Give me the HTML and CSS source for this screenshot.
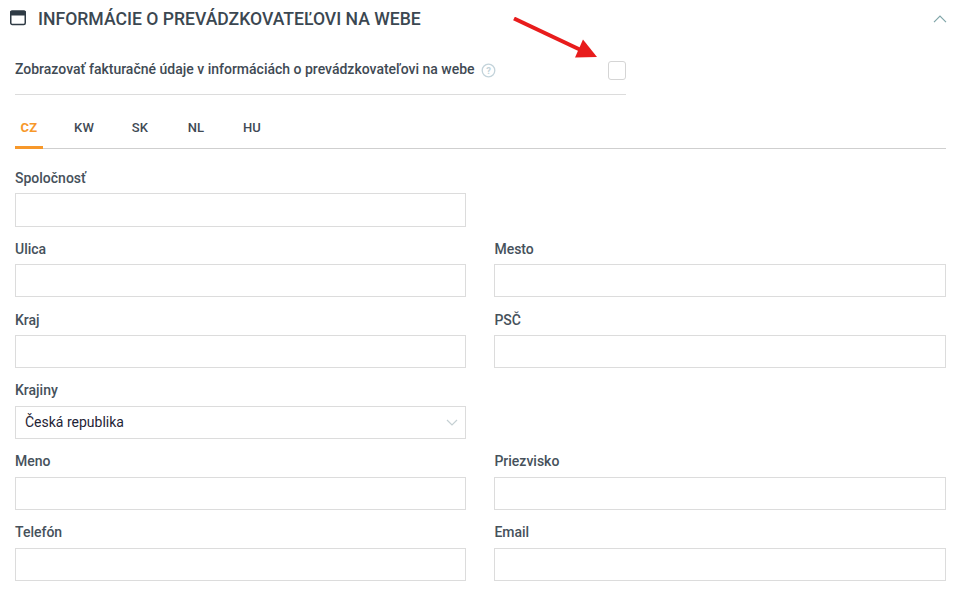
FILE: index.html
```html
<!DOCTYPE html>
<html lang="sk">
<head>
<meta charset="utf-8">
<title>Informácie o prevádzkovateľovi na webe</title>
<link rel="stylesheet" href="styles.css">
</head>
<body>
<section class="panel">
  <header class="head">
    <svg class="win-icon" width="18" height="16" viewBox="0 0 18 16"><rect x="1.750" y="1.250" width="14.500" height="13.200" rx="1.500" fill="none" stroke="#2f3b45" stroke-width="1.500"/><rect x="1" y="0.500" width="16" height="5" rx="1.500" fill="#2f3b45"/></svg>
    <h2 class="title">INFORMÁCIE O PREVÁDZKOVATEĽOVI NA WEBE</h2>
    <svg class="chev-up" width="14" height="8" viewBox="0 0 14 8"><path d="M1 7.2L7 1.2l6 6" fill="none" stroke="#7fa5a8" stroke-width="1.2"/></svg>
  </header>
  <div class="toggle-row">
    <span class="toggle-text">Zobrazovať fakturačné údaje v informáciách o prevádzkovateľovi na webe</span>
    <svg class="help" width="15" height="15" viewBox="0 0 15 15"><circle cx="7.5" cy="7.5" r="6.3" fill="none" stroke="#c3d3da" stroke-width="1.3"/><text x="7.5" y="11" text-anchor="middle" class="help-q">?</text></svg>
    <span class="check"></span>
  </div>
  <nav class="tabs">
    <a class="tab active">CZ</a><a class="tab">KW</a><a class="tab">SK</a><a class="tab">NL</a><a class="tab">HU</a>
  </nav>
  <form class="grid">
    <div class="field"><label>Spoločnosť</label><div class="input"></div></div><div class="field"></div>
    <div class="field"><label>Ulica</label><div class="input"></div></div>
    <div class="field"><label>Mesto</label><div class="input"></div></div>
    <div class="field"><label>Kraj</label><div class="input"></div></div>
    <div class="field"><label>PSČ</label><div class="input"></div></div>
    <div class="field"><label>Krajiny</label><div class="input select"><span class="select-value">Česká republika</span><svg width="12" height="7" viewBox="0 0 12 7"><path d="M1 1l5 5 5-5" fill="none" stroke="#c5d0d3" stroke-width="1.2"/></svg></div></div><div class="field"></div>
    <div class="field"><label>Meno</label><div class="input"></div></div>
    <div class="field"><label>Priezvisko</label><div class="input"></div></div>
    <div class="field"><label>Telefón</label><div class="input"></div></div>
    <div class="field"><label>Email</label><div class="input"></div></div>
  </form>
</section>
<svg class="arrow" width="90" height="45" viewBox="0 0 90 45"><line x1="1" y1="1.500" x2="72" y2="35" stroke="#e81c1c" stroke-width="4"/><polygon points="62,40.500 70,22.500 84,40" fill="#e81c1c"/></svg>
</body>
</html>
```
FILE: styles.css
```css
* { box-sizing: border-box; }
html, body { margin: 0; padding: 0; background: #fff; }
body { font-family: Roboto, "Liberation Sans", sans-serif; color: #2f3b45; width: 956px; height: 597px; overflow: hidden; position: relative; }
.panel { padding: 0 10px 0 15px; }
.head { display: flex; align-items: center; height: 38px; margin-left: -6px; }
.win-icon { margin: 0 11px 3px 0; flex: none; }
.title { margin: 0; font-size: 17.6px; font-weight: 500; color: #3b4751; line-height: 40px; flex: 1; }
.chev-up { margin-right: -1px; }
.toggle-row { display: flex; align-items: center; width: 611px; height: 57px; border-bottom: 1px solid #dcdcdc; padding-top: 8px; }
.toggle-text { font-size: 14px; font-weight: 500; color: #3f4a54; margin-bottom: 2px; }
.help { margin-left: 6px; flex: none; }
.help-q { font: 700 9.5px Roboto, sans-serif; fill: #c3d3da; }
.check { margin-left: auto; width: 18px; height: 19px; border: 1px solid #d5d5d5; border-radius: 3px; background: #fff; }
.tabs { display: flex; height: 54px; border-bottom: 1px solid #cfcfcf; align-items: flex-end; }
.tab { width: 28px; margin-right: 28px; height: 39px; padding: 10px 2px 0 0; text-align: center; font-size: 13px; font-weight: 500; letter-spacing: .2px; color: #3f4a54; margin-bottom: -1px; }
.tab.active { color: #f7982a; border-bottom: 3px solid #f7982a; font-weight: 700; padding-right: 0; }
.grid { display: grid; grid-template-columns: 451px 451.6px; column-gap: 28.4px; row-gap: 9.6px; padding-top: 16.3px; }
.field { min-height: 61.3px; }
.field label { display: block; font-size: 14px; font-weight: 500; line-height: 25px; height: 27.55px; margin-top: 0.45px; color: #46515b; }
.input { height: 33.3px; border: 1px solid #dcdcdc; background: #fff; }
.select { display: flex; align-items: center; justify-content: space-between; padding: 0 7px 0 9px; font-size: 14px; color: #1f2436; }
.select-value { margin-bottom: 2px; }
.arrow { position: absolute; left: 513px; top: 17px; }
```
